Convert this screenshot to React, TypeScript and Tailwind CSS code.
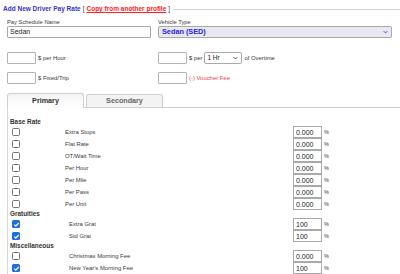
import React from 'react'

const rows = [
  { section: 'Base Rate' },
  { label: 'Extra Stops', value: '0.000' },
  { label: 'Flat Rate', value: '0.000' },
  { label: 'OT/Wait Time', value: '0.000' },
  { label: 'Per Hour', value: '0.000' },
  { label: 'Per Mile', value: '0.000' },
  { label: 'Per Pass', value: '0.000' },
  { label: 'Per Unit', value: '0.000' },
  { section: 'Gratuities' },
  { label: 'Extra Grat', value: '100', checked: true, indent: true },
  { label: 'Std Grat', value: '100', checked: true, indent: true },
  { section: 'Miscellaneous' },
  { label: 'Christmas Morning Fee', value: '0.000', indent: true },
  { label: "New Year's Morning Fee", value: '100', checked: true, indent: true },
]

function Chevron({ className }: { className: string }) {
  return (
    <svg viewBox="0 0 8 5" className={className} fill="none" stroke="currentColor" strokeWidth={1.2}>
      <path d="M1 1l3 3 3-3" />
    </svg>
  )
}

function Checkbox({ checked }: { checked?: boolean }) {
  if (checked) {
    return (
      <span className="flex items-center justify-center w-[8px] h-[8px] rounded-[1.5px] bg-[#1f6fe0]">
        <svg viewBox="0 0 8 8" className="w-[7px] h-[7px]" fill="none" stroke="white" strokeWidth={1.4}>
          <path d="M1.5 4.2l1.7 1.6L6.5 2.3" />
        </svg>
      </span>
    )
  }
  return <span className="block w-[8px] h-[8px] rounded-[1.5px] border border-[#767676] bg-white" />
}

function SmallBox() {
  return <div className="w-[29px] h-[12px] border border-[#b4b4b4] rounded-[1px] bg-white" />
}

export default function App() {
  return (
    <div className="w-[400px] h-[274px] overflow-hidden bg-white font-['Liberation_Sans',Arial,sans-serif] text-[#3a3a3a]">
      {/* Legend */}
      <div className="flex items-center h-[18px] pl-[3px] text-[6.5px] font-bold">
        <span className="text-[#3434c8]">Add New Driver Pay Rate</span>
        <span className="ml-[2px] font-normal text-[#333]">[</span>
        <a href="#" className="ml-[2px] text-[#ff2020] underline">Copy from another profile</a>
        <span className="ml-[2px] font-normal text-[#333]">]</span>
        <div className="flex-1 ml-[3px] border-t border-[#d0d0d0]" />
      </div>

      {/* Name + vehicle */}
      <div className="flex pl-[7px]">
        <div className="w-[144px]">
          <div className="h-[8px] leading-[8px] text-[5.8px]">Pay Schedule Name</div>
          <div className="h-[12px] border border-[#a9a9a9] rounded-[1px] pl-[2px] text-[7px] leading-[10px] font-medium text-[#222]">
            Sedan
          </div>
        </div>
        <div className="ml-[7px] w-[234px]">
          <div className="h-[8px] leading-[8px] text-[5.8px]">Vehicle Type</div>
          <div className="flex items-center justify-between h-[12px] border border-[#a9a9a9] rounded-[2px] bg-[#e8e8f0] pl-[3px] pr-[3px]">
            <span className="text-[7.3px] font-bold text-[#2222ee]">Sedan (SED)</span>
            <Chevron className="w-[5px] h-[4px] text-[#2222ee]" />
          </div>
        </div>
      </div>

      {/* Rate rows */}
      <div className="flex items-center mt-[14px] pl-[7px] h-[12px] text-[5.9px]">
        <div className="flex items-center w-[151px]">
          <SmallBox />
          <span className="ml-[2px]">$ per Hour</span>
        </div>
        <SmallBox />
        <span className="ml-[2px]">$ per</span>
        <div className="flex items-center justify-between ml-[2px] w-[38px] h-[12px] border border-[#a9a9a9] rounded-[2px] pl-[2px] pr-[3px]">
          <span className="text-[6.5px] text-[#222]">1 Hr</span>
          <Chevron className="w-[5px] h-[4px] text-[#333]" />
        </div>
        <span className="ml-[2px]">of Overtime</span>
      </div>
      <div className="flex items-center mt-[8px] pl-[7px] h-[12px] text-[5.9px]">
        <div className="flex items-center w-[151px]">
          <SmallBox />
          <span className="ml-[2px]">$ Fixed/Trip</span>
        </div>
        <SmallBox />
        <span className="ml-[2px] text-[#e84040]">(-) Voucher Fee</span>
      </div>

      {/* Tabs */}
      <div className="flex items-end mt-[10px] ml-[7px] h-[14px] border-b border-[#cfcfcf]">
        <div className="relative -mb-px flex items-center justify-center w-[77px] h-[15px] border border-b-0 border-[#cfcfcf] rounded-t-[3px] bg-gradient-to-b from-[#f4f4f4] to-white text-[7.2px] font-bold text-[#333]">
          Primary
        </div>
        <div className="ml-[2px] flex items-center justify-center w-[77px] h-[13px] border border-b-0 border-[#cfcfcf] rounded-t-[3px] bg-[#f3f3f3] text-[7.2px] font-bold text-[#666]">
          Secondary
        </div>
      </div>

      {/* Panel */}
      <div className="ml-[7px] h-[200px] border-l border-[#d8d8d8] pl-[2px] pt-[10px]">
        {rows.map((r, i) =>
          r.section ? (
            <div key={i} className="h-[8px] leading-[8px] text-[6.4px] font-bold text-[#333]">
              {r.section}
            </div>
          ) : (
            <div key={i} className="flex items-center h-[12px]">
              <div className="w-[55px] pl-[2px]">
                <Checkbox checked={r.checked} />
              </div>
              <div className={r.indent ? 'w-[228px] pl-[4px] text-[5.9px]' : 'w-[228px] text-[5.9px]'}>
                {r.label}
              </div>
              <input
                readOnly
                value={r.value}
                className="w-[29px] h-[11.5px] border border-[#a9a9a9] pl-[2px] text-[7px] text-[#222] outline-none"
              />
              <span className="ml-[2px] text-[5.5px]">%</span>
            </div>
          )
        )}
      </div>
    </div>
  )
}
